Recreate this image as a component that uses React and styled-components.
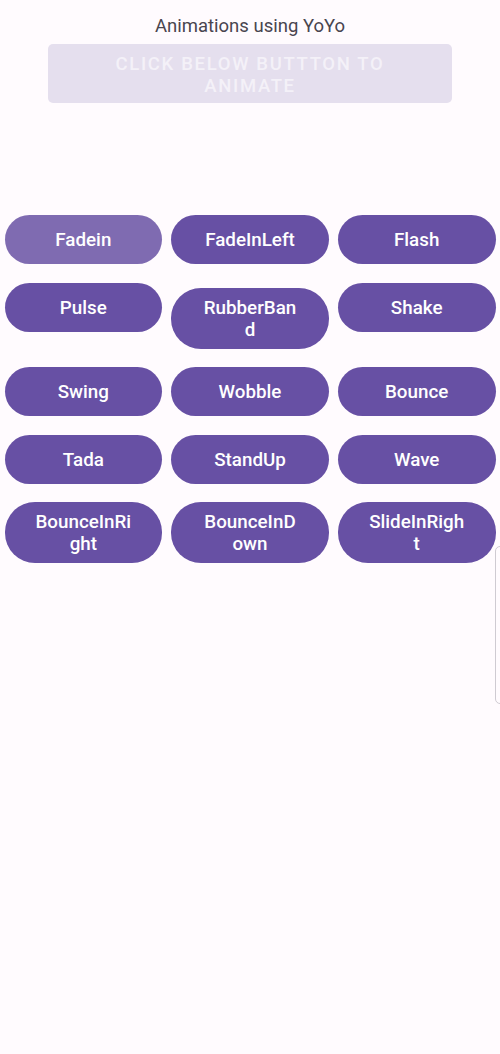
import React from 'react';
import styled, {createGlobalStyle} from 'styled-components';

const GlobalStyle = createGlobalStyle`
  html, body {
    margin: 0;
    padding: 0;
    background: #FFFBFE;
  }
  body {
    font-family: Roboto, "Noto Sans", sans-serif;
  }
`;

const Page = styled.div`
  position: relative;
  min-height: 1054px;
  background: #FFFBFE;
  display: flex;
  flex-direction: column;
  align-items: center;
`;

const Title = styled.div`
  margin-top: 15px;
  font-size: 18.5px;
  line-height: 22px;
  color: #49454F;
`;

const HintButton = styled.button`
  margin-top: 7px;
  width: 404px;
  min-height: 59px;
  padding: 9px 24px 6px;
  border: none;
  border-radius: 5px;
  background: #E5DFEE;
  color: #F4F1F8;
  font-family: Roboto, sans-serif;
  font-weight: 500;
  font-size: 18.5px;
  line-height: 22px;
  letter-spacing: 0.09em;
  text-transform: uppercase;
  text-align: center;
`;

const Grid = styled.div`
  align-self: stretch;
  margin-top: 112px;
  padding: 0 4.5px;
  display: grid;
  grid-template-columns: repeat(3, 1fr);
  column-gap: 9px;
  row-gap: 18.5px;
  align-items: baseline;
`;

const AnimButton = styled.button`
  display: flex;
  align-items: center;
  justify-content: center;
  min-height: 49px;
  padding: 9px 31px 8px;
  border: none;
  border-radius: 30px;
  background: ${p => (p.$faded ? '#7F6BB1' : '#6750A4')};
  color: #FFFFFF;
  font-family: Roboto, sans-serif;
  font-weight: 500;
  font-size: 18.8px;
  line-height: 22px;
  text-align: center;
  word-break: break-all;
`;

const EdgeHandle = styled.div`
  position: absolute;
  left: 495px;
  top: 546px;
  width: 10px;
  height: 158px;
  border: 1px solid #CFCBD2;
  border-radius: 6px;
  box-sizing: border-box;
`;

const animations = [
    'Fadein', 'FadeInLeft', 'Flash',
    'Pulse', 'RubberBand', 'Shake',
    'Swing', 'Wobble', 'Bounce',
    'Tada', 'StandUp', 'Wave',
    'BounceInRight', 'BounceInDown', 'SlideInRight',
];

const App = () => {
    return (
        <>
            <GlobalStyle/>
            <Page>
                <Title>Animations using YoYo</Title>
                <HintButton disabled>Click below buttton to animate</HintButton>
                <Grid>
                    {animations.map((name, i) => (
                        <AnimButton key={name} $faded={i === 0}>{name}</AnimButton>
                    ))}
                </Grid>
                <EdgeHandle/>
            </Page>
        </>
    );
};

export default App;
